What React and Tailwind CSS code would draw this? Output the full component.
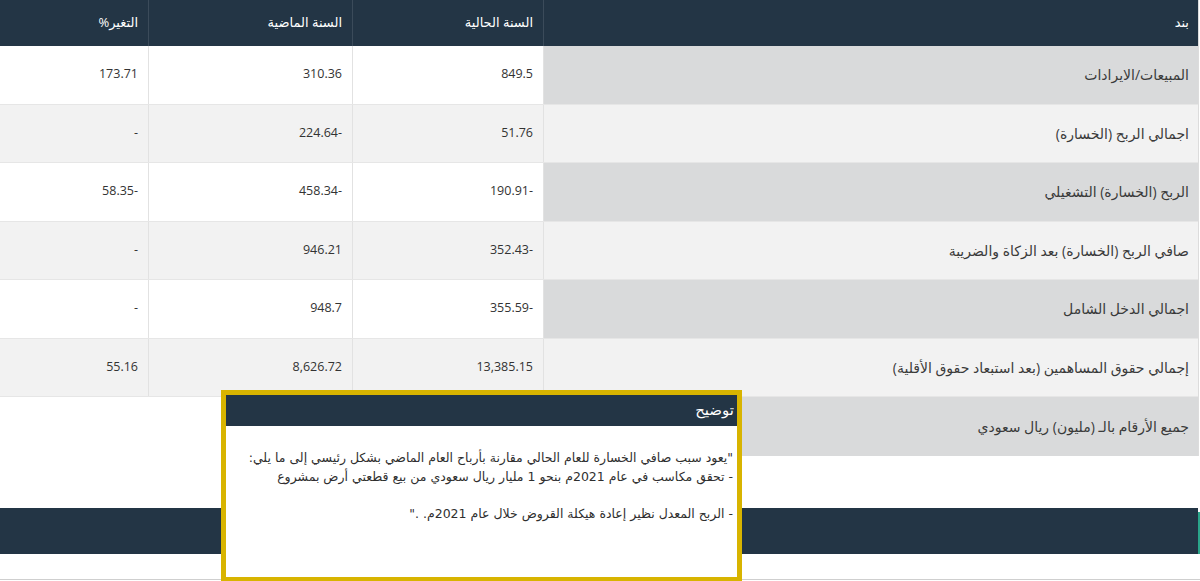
import React from "react";

const rows = [
  { label: "المبيعات/الايرادات", cur: "849.5", prev: "310.36", chg: "173.71" },
  { label: "اجمالي الربح (الخسارة)", cur: "51.76", prev: "224.64-", chg: "-" },
  { label: "الربح (الخسارة) التشغيلي", cur: "190.91-", prev: "458.34-", chg: "58.35-" },
  { label: "صافي الربح (الخسارة) بعد الزكاة والضريبة", cur: "352.43-", prev: "946.21", chg: "-" },
  { label: "اجمالي الدخل الشامل", cur: "355.59-", prev: "948.7", chg: "-" },
  { label: "إجمالي حقوق المساهمين (بعد استبعاد حقوق الأقلية)", cur: "13,385.15", prev: "8,626.72", chg: "55.16" },
];

const numCls = "flex items-center justify-end pr-[10px] text-[12.5px] text-[#333] font-['Open_Sans','DejaVu_Sans',sans-serif]";

export default function App() {
  return (
    <div className="relative w-[1200px] h-[581px] overflow-hidden bg-white font-['Open_Sans','DejaVu_Sans',sans-serif]">
      <div dir="rtl" className="w-[1199px] border-r border-[#dcdcdc]">
        {/* header */}
        <div className="grid grid-cols-[655px_191px_204px_148px] h-[46px] bg-[#233545] text-white text-[13px] font-medium">
          <div className="flex items-center pr-[9px] border-l border-[#3b4b5a]">بند</div>
          <div className="flex items-center pr-[10px] border-l border-[#3b4b5a]">السنة الحالية</div>
          <div className="flex items-center pr-[10px] border-l border-[#3b4b5a]">السنة الماضية</div>
          <div className="flex items-center pr-[10px]">التغير%</div>
        </div>
        {rows.map((r, i) => {
          const odd = i % 2 === 0;
          return (
            <div
              key={i}
              className={`grid grid-cols-[655px_191px_204px_148px] h-[58.5px] border-b border-[#e6e6e6] ${odd ? "bg-white" : "bg-[#f2f2f2]"}`}
            >
              <div className={`flex items-center pr-[9px] text-[14px] text-[#3a3a3a] border-l border-[#e2e2e2] ${odd ? "bg-[#d9dadb]" : "bg-[#f2f2f2]"}`}>
                {r.label}
              </div>
              <div className="border-l border-[#e2e2e2] flex">
                <div dir="ltr" className={`${numCls} w-full`}>{r.cur}</div>
              </div>
              <div className="border-l border-[#e2e2e2] flex">
                <div dir="ltr" className={`${numCls} w-full`}>{r.prev}</div>
              </div>
              <div className="flex">
                <div dir="ltr" className={`${numCls} w-full`}>{r.chg}</div>
              </div>
            </div>
          );
        })}
        <div className="grid grid-cols-[655px_543px] h-[58.5px] bg-white">
          <div className="flex items-center pr-[9px] text-[14px] text-[#3a3a3a] bg-[#d9dadb]">
            جميع الأرقام بالـ (مليون) ريال سعودي
          </div>
          <div />
        </div>
      </div>

      <div className="h-[52px]" />
      <div className="flex h-[46px] w-[1200px]">
        <div className="h-full w-[1198px] bg-[#233545]" />
        <div className="mt-[4px] h-[42px] w-[2px] bg-[#2aa58a]" />
      </div>
      <div className="h-[25px]" />
      <div className="h-px w-[1200px] bg-[#cfcfcf]" />

      {/* popup overlay */}
      <div
        dir="rtl"
        className="absolute left-[221px] top-[390px] w-[521px] h-[192px] border-[5px] border-[#d8b400] bg-white flex flex-col"
      >
        <div className="h-[31px] bg-[#233545] text-white text-[15px] font-medium flex items-start pt-[3px] pr-[3px]">
          توضيح
        </div>
        <div className="pt-[23px] pr-[4px] text-[12.5px] leading-[18.5px] text-[#2f2f2f] font-['DejaVu_Sans',sans-serif]">
          <div className="whitespace-nowrap">"يعود سبب صافي الخسارة للعام الحالي مقارنة بأرباح العام الماضي بشكل رئيسي إلى ما يلي:</div>
          <div className="whitespace-nowrap">- تحقق مكاسب في عام 2021م بنحو 1 مليار ريال سعودي من بيع قطعتي أرض بمشروع</div>
          <div className="h-[18.5px]" />
          <div className="whitespace-nowrap">- الربح المعدل نظير إعادة هيكلة القروض خلال عام 2021م. ."</div>
        </div>
      </div>
    </div>
  );
}
